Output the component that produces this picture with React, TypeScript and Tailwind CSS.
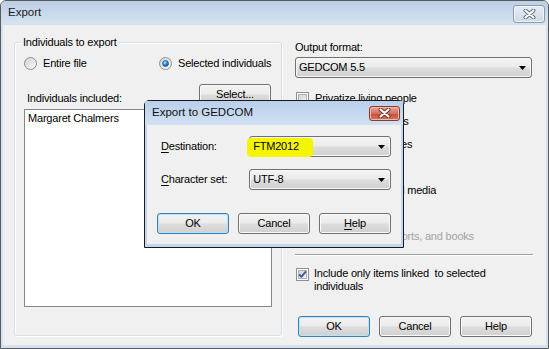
import React, { useId } from 'react';

const face =
  'bg-[linear-gradient(#f3f3f3_0%,#ebebeb_48%,#dddddd_52%,#d0d0d0_100%)]';

const Radio = ({ checked = false }: { checked?: boolean }) => {
  const id = useId();
  return (
    <svg width="13" height="13" viewBox="0 0 13 13" className="shrink-0">
      <defs>
        <linearGradient id={`${id}o`} x1="0" y1="0" x2="1" y2="1">
          <stop offset="0" stopColor="#cfd1d4" />
          <stop offset="1" stopColor="#fbfbfb" />
        </linearGradient>
        <radialGradient id={`${id}d`} cx="0.4" cy="0.35" r="0.75">
          <stop offset="0" stopColor="#bfeaff" />
          <stop offset="0.45" stopColor="#2f8fd8" />
          <stop offset="1" stopColor="#0d3f7a" />
        </radialGradient>
      </defs>
      <circle cx="6.5" cy="6.5" r="6" fill={`url(#${id}o)`} stroke="#8e8f8f" />
      {checked && <circle cx="6.5" cy="6.5" r="3" fill={`url(#${id}d)`} stroke="#1b4b80" strokeWidth="0.6" />}
    </svg>
  );
};

const Check = ({ checked = false, dim = false }: { checked?: boolean; dim?: boolean }) => {
  const id = useId();
  return (
    <svg width="13" height="13" viewBox="0 0 13 13" className="shrink-0">
      <defs>
        <linearGradient id={id} x1="0" y1="0" x2="1" y2="1">
          <stop offset="0" stopColor={dim ? '#e6e6e6' : '#cbcfd5'} />
          <stop offset="1" stopColor="#f6f6f6" />
        </linearGradient>
      </defs>
      <rect x="0.5" y="0.5" width="12" height="12" fill="#fff" stroke={dim ? '#bcbcbc' : '#8e8f8f'} />
      <rect x="2.5" y="2.5" width="8" height="8" fill={`url(#${id})`} stroke={dim ? '#d6d6d6' : '#aeb3b9'} />
      {checked && (
        <path d="M3.2 6.4 L5.4 8.9 L9.9 3.4" fill="none" stroke="#3d5591" strokeWidth="1.8" strokeLinejoin="round" />
      )}
    </svg>
  );
};

const Arrow = () => (
  <svg width="7" height="4" viewBox="0 0 7 4" className="shrink-0">
    <polygon points="0,0 7,0 3.5,4" fill="#000" />
  </svg>
);

const Combo = ({
  value,
  w,
  mark = false,
}: {
  value: string;
  w: string;
  mark?: boolean;
}) => (
  <div
    className={`relative flex h-[21px] ${w} items-center justify-between rounded-[3px] border border-[#707070] pl-[3px] pr-[5px] shadow-[inset_0_0_0_1px_#f8f8f8] ${face}`}
  >
    {mark && (
      <span className="absolute left-[-3px] top-[1px] h-[19px] w-[66px] rounded-[4px] bg-[#f5f500] blur-[0.6px]" />
    )}
    <span className="relative leading-[13px]">{value}</span>
    <Arrow />
  </div>
);

const Btn = ({ children, def = false }: { children: React.ReactNode; def?: boolean }) => (
  <div
    className={`flex h-[21px] w-[72px] shrink-0 items-center justify-center rounded-[3px] border ${
      def ? 'border-[#3c7fb1] shadow-[inset_0_0_0_1px_#b8e3fa]' : 'border-[#707070] shadow-[inset_0_0_0_1px_#fafafa]'
    } ${face} leading-[13px]`}
  >
    {children}
  </div>
);

const XGlyph = ({ edge }: { edge: string }) => (
  <svg width="13" height="10" viewBox="0 0 13 10">
    <path d="M2.5 1.5 L10.5 8.5 M10.5 1.5 L2.5 8.5" stroke={edge} strokeWidth="4" strokeLinecap="round" />
    <path d="M2.5 1.5 L10.5 8.5 M10.5 1.5 L2.5 8.5" stroke="#fff" strokeWidth="2.2" strokeLinecap="round" />
  </svg>
);

// rows 4 and 6 sit fully behind the dialog
const options = [
  'Privatize living people',
  'Include private facts',
  'Include private notes',
  'Include tasks',
  'Include photos and media',
  'Include web links',
];

export default function App() {
  return (
    <div className="relative h-[349px] w-[549px] overflow-hidden rounded-t-[6px] border border-[#5a5a5a] bg-[#d4e1f0] font-['Liberation_Sans',Arial,sans-serif] text-[11px] tracking-[-0.2px] text-black">
      {/* title bar */}
      <div className="flex h-[24px] items-center justify-between bg-[linear-gradient(#bccfe6,#d7e3f1)] pl-[7px] pr-[3px]">
        <span className="text-[11.5px] tracking-normal text-[#1b1b1b]">Export</span>
        <div className="mt-[1px] flex h-[18px] w-[32px] items-center justify-center rounded-[3px] border border-[#8c9bb0] bg-[linear-gradient(#e6edf6,#cfdae8)] shadow-[inset_0_0_0_1px_#eef3f9]">
          <XGlyph edge="#5f6b7a" />
        </div>
      </div>

      {/* client */}
      <div className="mx-[2px] flex h-[320px] bg-[#f0f0f0] pl-[11px]">
        {/* group box */}
        <div className="relative mt-[17px] h-[294px] w-[268px] rounded-[3px] border border-[#d5dfe5] shadow-[inset_1px_1px_0_#fff,1px_1px_0_#fff]">
          <span className="absolute top-[-7px] left-[7px] bg-[#f0f0f0] px-[1px] leading-[13px]">Individuals to export</span>
          <div className="flex pl-[9px] pt-[14px] leading-[13px]">
            <div className="flex w-[135px] items-center gap-[6px]">
              <Radio />
              <span>Entire file</span>
            </div>
            <div className="flex items-center gap-[6px]">
              <Radio checked />
              <span>Selected individuals</span>
            </div>
          </div>
          <div className="mt-[14px] flex h-[21px] items-end justify-between pl-[12px] pr-[10px]">
            <span className="leading-[13px]">Individuals included:</span>
            <Btn>Select...</Btn>
          </div>
          <div className="ml-[9px] mt-[4px] h-[198px] w-[248px] border border-[#828790] bg-white pl-[3px] pt-[2px] leading-[13px]">
            Margaret Chalmers
          </div>
        </div>

        {/* right column */}
        <div className="ml-[13px] flex w-[238px] flex-col pt-[16px]">
          <div className="leading-[13px]">Output format:</div>
          <div className="mt-[3px]">
            <Combo value="GEDCOM 5.5" w="w-[237px]" />
          </div>
          <div className="mt-[9px] flex flex-col">
            {options.map((o) => (
              <div key={o} className="flex h-[23px] items-center gap-[6px] pl-[1px] leading-[13px]">
                <Check />
                <span>{o}</span>
              </div>
            ))}
            <div className="flex h-[23px] items-center gap-[6px] pl-[1px] leading-[13px] text-[#a3a3a3]">
              <Check dim />
              <span>Include charts, reports, and books</span>
            </div>
          </div>
          <div className="mt-[6px] border-t border-b border-t-[#a0a0a0] border-b-white" />
          <div className="mt-[11px] flex items-start gap-[5px] pl-[1px] leading-[13px]">
            <div className="mt-[1px]">
              <Check checked />
            </div>
            <span>
              {'Include only items linked\u00A0 to selected'}
              <br />
              individuals
            </span>
          </div>
          <div className="mt-[23px] flex gap-[9px] pl-[3px]">
            <Btn def>OK</Btn>
            <Btn>Cancel</Btn>
            <Btn>Help</Btn>
          </div>
        </div>
      </div>

      {/* Export to GEDCOM dialog */}
      <div className="absolute left-[143px] top-[99px] h-[148px] w-[260px] rounded-t-[5px] border border-[#1a1a1a] bg-[#c3d6ee]">
        <div className="flex h-[24px] items-center justify-between bg-[linear-gradient(#b9cfeb,#d2e1f3)] pl-[7px] pr-[3px]">
          <span className="text-[11.5px] tracking-normal text-[#111]">Export to GEDCOM</span>
          <div className="flex h-[15px] w-[31px] items-center justify-center rounded-[3px] border border-[#8a3a2e] bg-[linear-gradient(#eba597,#d46e5d_50%,#c44a37_51%,#d77a62)] shadow-[inset_0_0_0_1px_#f1b8ab]">
            <XGlyph edge="#6e2a22" />
          </div>
        </div>
        <div className="mx-[2px] h-[119px] bg-[#f0f0f0] px-[10px] pt-[11px]">
          <div className="flex h-[21px] items-center pl-[4px]">
            <span className="w-[89px] leading-[13px]">
              <span className="underline underline-offset-[2px]">D</span>estination:
            </span>
            <Combo value="FTM2012" w="w-[143px]" mark />
          </div>
          <div className="mt-[12px] flex h-[21px] items-center pl-[4px]">
            <span className="w-[89px] leading-[13px]">
              <span className="underline underline-offset-[2px]">C</span>haracter set:
            </span>
            <Combo value="UTF-8" w="w-[143px]" />
          </div>
          <div className="mt-[23px] flex gap-[9px]">
            <Btn def>OK</Btn>
            <Btn>Cancel</Btn>
            <Btn>
              <span className="underline underline-offset-[2px]">H</span>elp
            </Btn>
          </div>
        </div>
      </div>
    </div>
  );
}
